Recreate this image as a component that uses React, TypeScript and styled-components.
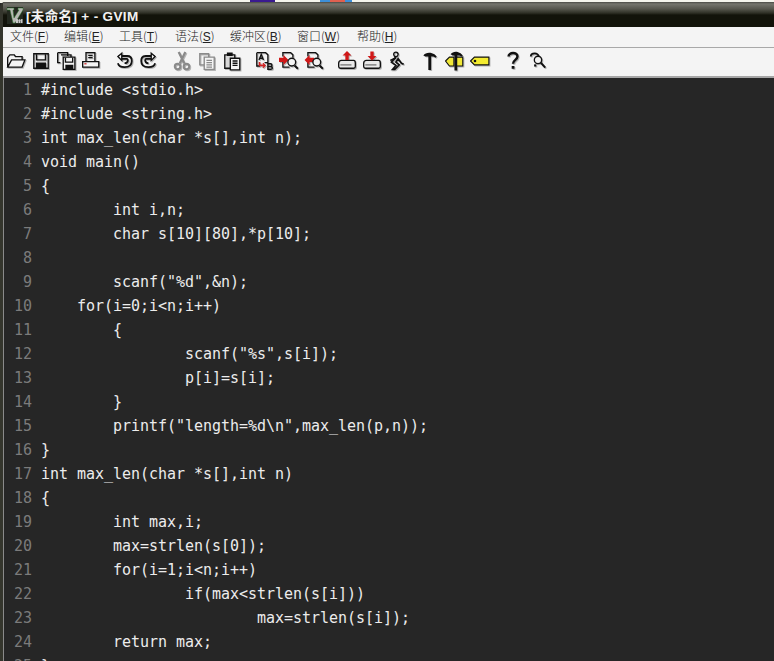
import { Fragment, ReactNode } from "react";
import styled, { createGlobalStyle } from "styled-components";

const GlobalStyle = createGlobalStyle`
  html, body {
    margin: 0;
    padding: 0;
    height: 661px;
    overflow: hidden;
    background: #262626;
  }
`;

const Page = styled.div`
  width: 774px;
  height: 661px;
  overflow: hidden;
  display: flex;
  flex-direction: column;
`;
const DesktopStrip = styled.div`
  height: 3px;
  flex: none;
  background: linear-gradient(
    to right,
    #f4f4ec 0 250px,
    #3a1a90 250px 275px,
    #f4f4ec 275px 320px,
    #3d8fd8 320px 330px,
    #e06050 330px 345px,
    #3d8fd8 345px 352px,
    #f4f4ec 352px
  );
`;
const Win = styled.div`
  flex: 1;
  min-height: 0;
  display: flex;
  flex-direction: column;
  background: #2c2d24;
  border-left: 3px solid #34352c;
  margin-top: -1px;
  border-top-left-radius: 5px;
`;
const TitleBar = styled.div`
  height: 25px;
  flex: none;
  display: flex;
  align-items: center;
  gap: 1px;
  padding: 1px 0 0 2px;
  box-sizing: border-box;
  background: linear-gradient(
    to bottom,
    #4a4a45 0,
    #74746c 2px,
    #55554c 7px,
    #2f3026 11px,
    #12130a 13px,
    #12130a 100%
  );
`;
const TitleText = styled.span`
  color: #f2f2f2;
  font: 700 13.5px "Liberation Sans", "Noto Sans CJK SC", sans-serif;
  letter-spacing: 0.35px;
`;
const MenuBar = styled.div`
  height: 21px;
  flex: none;
  display: flex;
  align-items: center;
  padding: 0 0 4px 7px;
  box-sizing: border-box;
  background: #f4f4f4;
  border-bottom: 1px solid #a8a8a8;
`;
const MenuItem = styled.span<{ $w: number }>`
  width: ${(p) => p.$w}px;
  flex: none;
  color: #222;
  font: 300 12px "Noto Sans CJK SC", "Liberation Sans", sans-serif;
  u {
    font-family: "Liberation Sans", sans-serif;
  }
`;
const ToolBar = styled.div`
  height: 30px;
  flex: none;
  display: flex;
  align-items: center;
  padding-bottom: 2px;
  background: #f4f4f4;
  border-bottom: 2px solid #a6a6a6;
  box-sizing: border-box;
`;
const ToolSlot = styled.span`
  width: 25px;
  height: 20px;
  flex: none;
  display: flex;
  align-items: center;
  justify-content: center;
`;
const ToolSep = styled.span<{ $w: number }>`
  width: ${(p) => p.$w}px;
  flex: none;
`;
const IconSvg = styled.svg`
  width: 20px;
  height: 20px;
  filter: drop-shadow(1px 1px 0 #b4b4b4);
`;
const Editor = styled.div`
  flex: 1;
  min-height: 0;
  overflow: hidden;
  background: #262626;
  border-left: 1px solid #8a8a8a;
  padding-left: 1px;
  font: 15px/24px "DejaVu Sans Mono", monospace;
  letter-spacing: -0.03px;
`;
const Line = styled.div`
  display: flex;
  height: 24px;
  white-space: pre;
`;
const LineNo = styled.span`
  width: 36px;
  flex: none;
  padding-right: 9px;
  box-sizing: border-box;
  text-align: right;
  color: #7b7b7b;
`;
const Code = styled.span`
  color: #ececec;
  tab-size: 8;
`;

const Ico = ({ children, dim }: { children: ReactNode; dim?: boolean }) => (
  <IconSvg
    viewBox="0 0 18 18"
    fill="none"
    stroke={dim ? "#8a8a8a" : "#111"}
    strokeWidth="1.2"
  >
    {children}
  </IconSvg>
);

const VimLogo = () => (
  <svg width="20" height="20" viewBox="0 0 20 20">
    <rect x="2" y="2" width="16" height="17" fill="#23281f" />
    <path d="M2 3h7v2H8l1 8 5-8h-1V3h5v2l-8 13H8L5 5H2z" fill="#b8b8b4" stroke="#2f7a2f" strokeWidth=".5" />
    <path d="M11 18v-4h1.500l1 1 1-1 1 1 1-1h1v4h-1.500v-2.500h-.5V18h-1.500v-2.500h-.5V18z" fill="#c8c8c8" />
  </svg>
);

const icons: ReactNode[][] = [
  [
    <Ico key="o"><path d="M1.500 14.500V6l2-2.500h4l1 1.500h6v3M1.500 14.500 5 8h12l-2.500 6.500z" fill="#f4f4f4" /></Ico>,
    <Ico key="s"><path d="M2.500 2.500h13v13h-13z" /><path d="M5 3v5h8V3" /><path d="M5 15v-4h8v4z" fill="#111" /></Ico>,
    <Ico key="a"><path d="M1.500 1.500h9v3M1.500 1.500v9h2.500" /><path d="M4.500 3.500h9v3" /><path d="M6.500 5.500h10.500v11H6.500z" fill="#f4f4f4" /><path d="M8.500 6v4h6.500V6" /><path d="M9 16v-3h6v3z" fill="#111" /></Ico>,
    <Ico key="p"><path d="M4.500 1.500h8v8h-8z" /><path d="M6.500 4h4M6.500 6h4" /><path d="M1.500 9.500h14.500v5H1.500z" fill="#f4f4f4" /><path d="M3 11.500h2" stroke="#d03030" /></Ico>,
  ],
  [
    <Ico key="u"><path d="M4 4.500h8c3.500 0 4 2 4 4.500 0 3.500-2.500 5.500-6.500 5.500-3 0-5.500-1.500-6-3.500" strokeWidth="1.600" /><path d="M6.500 7h5c1.500 0 1.500 4-2 4" strokeWidth="1.600" /><path d="M7 2 3.500 5 7 8.500z" fill="#f4f4f4" /></Ico>,
    <Ico key="r"><path d="M14 4.500H6C2.500 4.500 2 6.500 2 9c0 3.500 2.500 5.500 6.500 5.500 3 0 5.500-1.500 6-3.500" strokeWidth="1.600" /><path d="M11.500 7h-5C5 7 5 11 8.500 11" strokeWidth="1.600" /><path d="M11 2l3.500 3L11 8.500z" fill="#f4f4f4" /></Ico>,
  ],
  [
    <Ico key="c" dim><path d="M6 1l5 10M12 1 7 11" strokeWidth="2" /><circle cx="5" cy="14" r="2.500" strokeWidth="1.800" /><circle cx="13" cy="14" r="2.500" strokeWidth="1.800" /></Ico>,
    <Ico key="y" dim><path d="M2.500 2.500h8v10h-8z" /><path d="M6.500 5.500h9v11h-9z" fill="#f4f4f4" /><path d="M8.500 8.500h5M8.500 10.500h5M8.500 12.500h5M8.500 14.500h5" /></Ico>,
    <Ico key="v"><path d="M2.500 3.500h9v12h-9z" fill="#d8d8d8" /><path d="M5 4V2h4v2z" fill="#111" stroke="#111" /><path d="M7.500 6.500h8.500v10.500H7.500z" fill="#f4f4f4" /><path d="M9.500 9h4.500M9.500 11h4.500M9.500 13h4.500" /></Ico>,
  ],
  [
    <Ico key="ab"><path d="M2.500 1.500h8l2 2v7h-3M2.500 1.500v12h3" /><path d="M4.500 8l2-5 2 5M5.300 6.500h2.500" /><path d="M5 10v3h4" stroke="#d02020" strokeWidth="1.500" /><path d="M8 11l2 2-2 2" stroke="#d02020" /><path d="M12.500 11.500v5h2.500c2 0 2-2.500 0-2.500 1.500 0 1.500-2.500 0-2.500zM12.500 14h2.500" strokeWidth="1.300" /></Ico>,
    <Ico key="fn"><path d="M3.500 5V1.500h7l2 2V6M3.500 10v4.500h6" /><path d="M0 6h4V3.500L8.500 8 4 12.500V10H0z" fill="#d01818" stroke="none" /><circle cx="11.500" cy="10" r="3.500" fill="#f4f4f4" /><path d="M14 13l3 3" strokeWidth="1.800" /></Ico>,
    <Ico key="fp"><path d="M3.500 5V1.500h7l2 2V6M3.500 10v4.500h6" /><path d="M9 6H5V3.500L.5 8 5 12.500V10h4z" fill="#d01818" stroke="none" /><circle cx="11.500" cy="10" r="3.500" fill="#f4f4f4" /><path d="M14 13l3 3" strokeWidth="1.800" /></Ico>,
  ],
  [
    <Ico key="ls"><path d="M1.500 11c0-1.500 1-2.500 2.500-2.500h11c1 0 1.500 1 1.500 2.500v3c0 1-.5 1.500-1.500 1.500H3c-1 0-1.500-.5-1.500-1.500z" fill="#e8e8e8" /><path d="M3 12.500h10" stroke="#777" /><path d="M9 0l4 4h-2.500v4h-3V4H5z" fill="#d01818" stroke="none" /></Ico>,
    <Ico key="ss"><path d="M1.500 11c0-1.500 1-2.500 2.500-2.500h11c1 0 1.500 1 1.500 2.500v3c0 1-.5 1.500-1.500 1.500H3c-1 0-1.500-.5-1.500-1.500z" fill="#e8e8e8" /><path d="M3 12.500h10" stroke="#777" /><path d="M9 8.500l4-4h-2.500v-4h-3v4H5z" fill="#d01818" stroke="none" /></Ico>,
    <Ico key="rs"><circle cx="8" cy="3" r="2" /><path d="M8 5.500 4 10l4 3-3 3.500h2l4-4-3-2.500 2-3 3 4 2 1" strokeWidth="1.500" /><path d="M8 6 3 8.500" strokeWidth="1.500" /></Ico>,
  ],
  [
    <Ico key="mk"><path d="M3 4c2-3 7-3 10-1l2 2-1 1-2-1H10v12H7.500V5H5z" fill="#111" stroke="none" /></Ico>,
    <Ico key="bt"><path d="M0.500 9 4 5.500h4v8H4z" fill="#f0e838" strokeWidth="1" /><path d="M10 5.500h6v8h-6" fill="#f0e838" strokeWidth="1" /><path d="M5 3c2-3 6-3 9-1l2 2-1 1-2-1h-2v13.500H8.500V4H7z" fill="#111" stroke="none" /></Ico>,
    <Ico key="t"><path d="M.5 9 4 5.500h13v7H4z" fill="#f4ec30" strokeWidth="1" /><circle cx="4.500" cy="9" r=".6" fill="#111" /></Ico>,
  ],
  [
    <Ico key="h"><path d="M5 5c0-4 8-4.500 8 0 0 3-4 3-4 6.500" strokeWidth="2.200" /><path d="M7.800 13.500h2.500V16H7.800z" fill="#111" stroke="none" /></Ico>,
    <Ico key="fh"><path d="M2.500 5c0-3.500 7-4 7 0 0 2-3 2.500-3 5" strokeWidth="1.600" /><path d="M5.500 12h2v2h-2z" fill="#111" stroke="none" /><circle cx="9" cy="8" r="3.300" fill="#f4f4f4" /><path d="M11.500 10.500l4 4.500" strokeWidth="1.800" /></Ico>,
  ],
];

const menus: [string, string, number][] = [
  ["文件", "F", 54],
  ["编辑", "E", 55],
  ["工具", "T", 56],
  ["语法", "S", 55],
  ["缓冲区", "B", 67],
  ["窗口", "W", 60],
  ["帮助", "H", 50],
];

const source = [
  "#include <stdio.h>",
  "#include <string.h>",
  "int max_len(char *s[],int n);",
  "void main()",
  "{",
  "\tint i,n;",
  "\tchar s[10][80],*p[10];",
  "",
  "\tscanf(\"%d\",&n);",
  "    for(i=0;i<n;i++)",
  "\t{",
  "\t\tscanf(\"%s\",s[i]);",
  "\t\tp[i]=s[i];",
  "\t}",
  "\tprintf(\"length=%d\\n\",max_len(p,n));",
  "}",
  "int max_len(char *s[],int n)",
  "{",
  "\tint max,i;",
  "\tmax=strlen(s[0]);",
  "\tfor(i=1;i<n;i++)",
  "\t\tif(max<strlen(s[i]))",
  "\t\t\tmax=strlen(s[i]);",
  "\treturn max;",
  "}",
];

const sepWidths = [0, 8, 8, 7, 8, 8, 8];

function App() {
  return (
    <Page>
      <GlobalStyle />
      <DesktopStrip />
      <Win>
        <TitleBar>
          <VimLogo />
          <TitleText>[未命名] + - GVIM</TitleText>
        </TitleBar>
        <MenuBar>
          {menus.map(([label, key, w]) => (
            <MenuItem key={key} $w={w}>
              {label}(<u>{key}</u>)
            </MenuItem>
          ))}
        </MenuBar>
        <ToolBar>
          {icons.map((group, i) => (
            <Fragment key={i}>
              <ToolSep $w={sepWidths[i]} />
              {group.map((icon, j) => (
                <ToolSlot key={j}>{icon}</ToolSlot>
              ))}
            </Fragment>
          ))}
        </ToolBar>
        <Editor>
          {source.map((text, i) => (
            <Line key={i}>
              <LineNo>{i + 1}</LineNo>
              <Code>{text}</Code>
            </Line>
          ))}
        </Editor>
      </Win>
    </Page>
  );
}

export default App;
